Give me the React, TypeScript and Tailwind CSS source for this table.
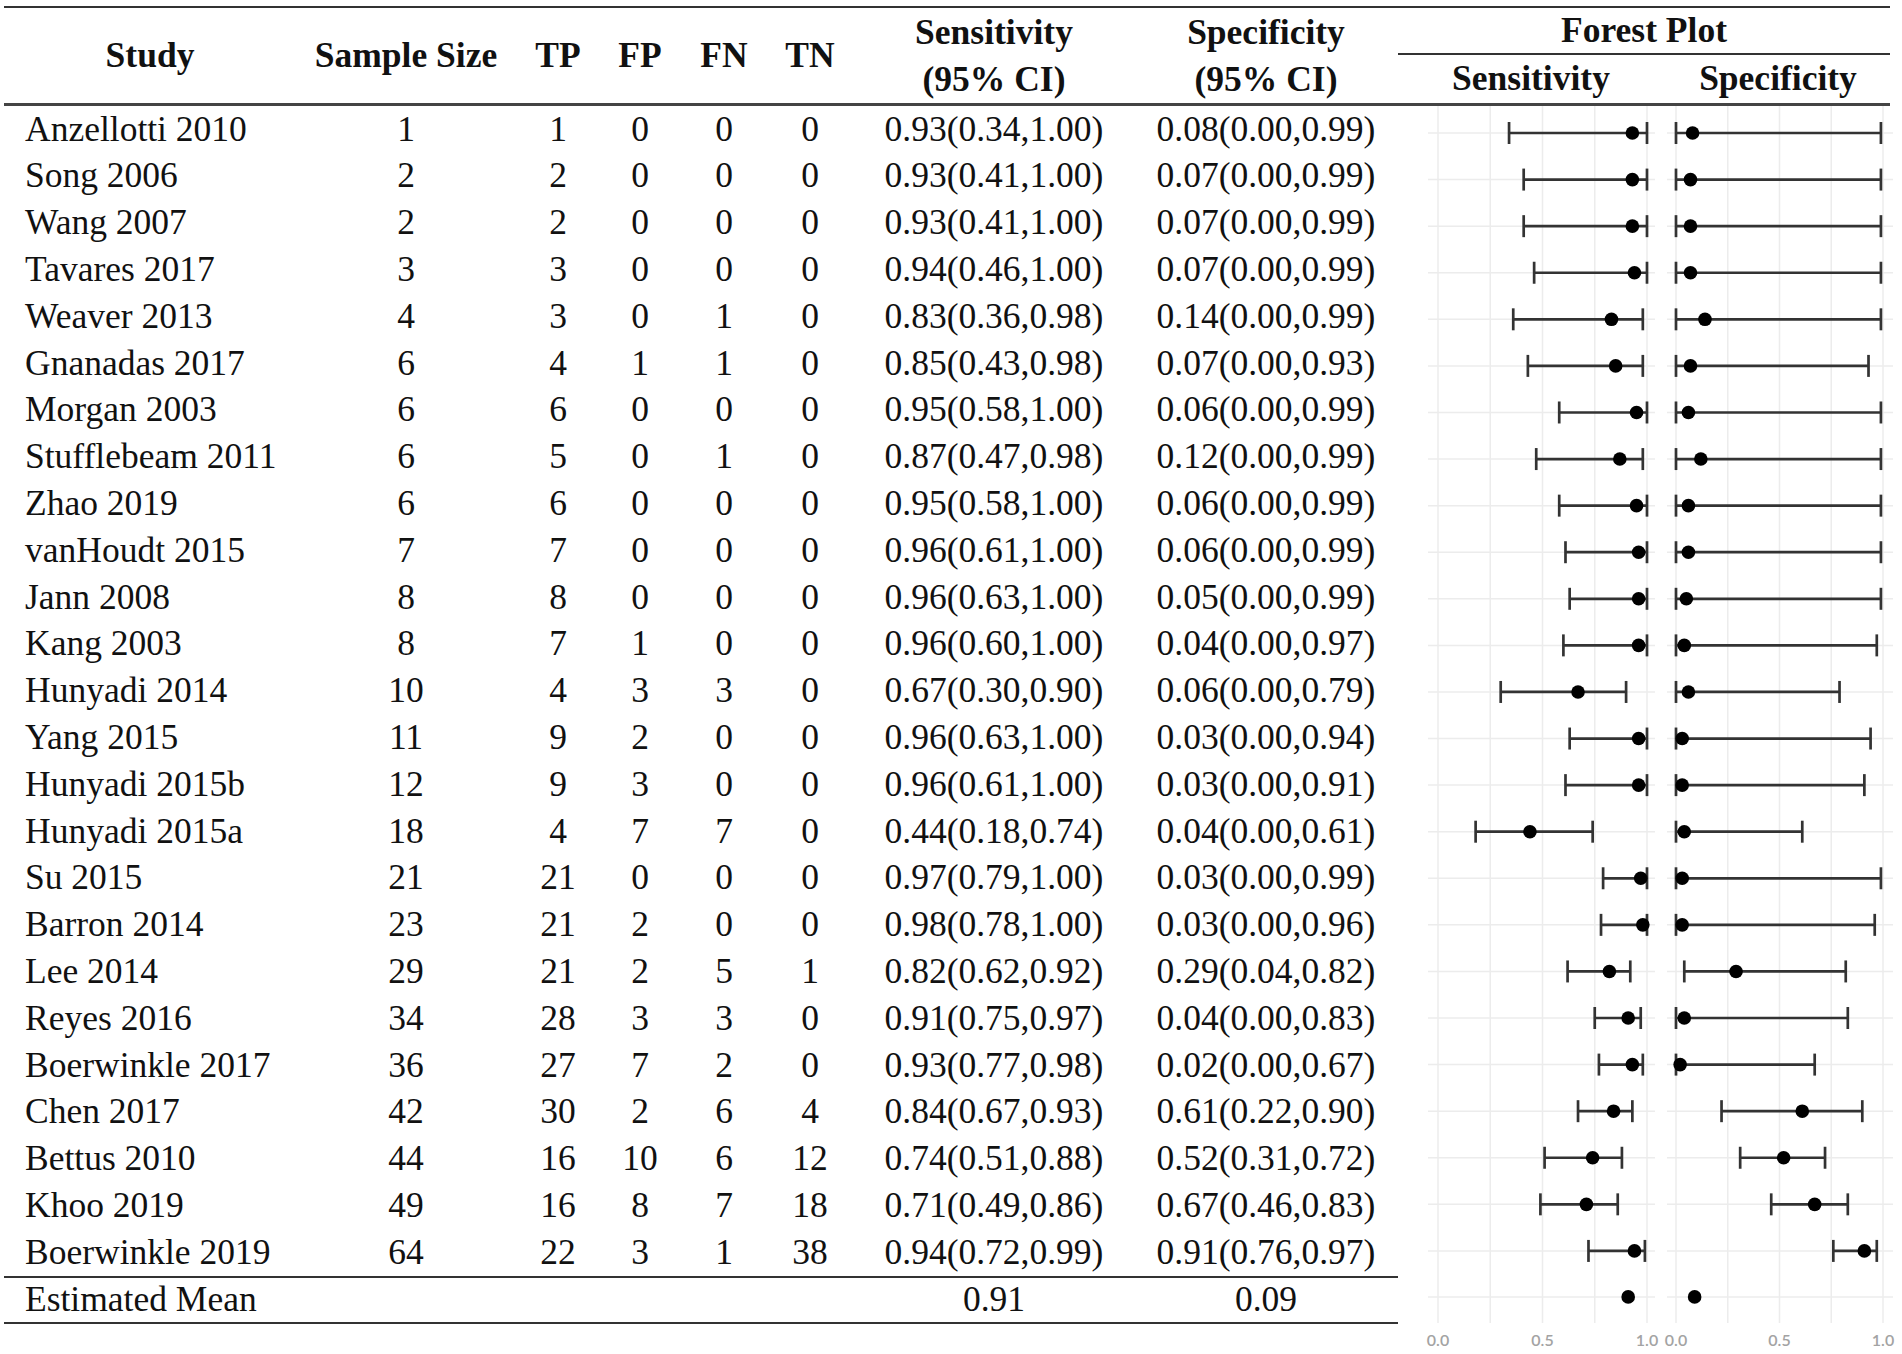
import React from "react";

type Row = {
  study: string;
  n: number;
  tp: number;
  fp: number;
  fn: number;
  tn: number;
  sens: [number, number, number];
  spec: [number, number, number];
};

const rows: Row[] = [
  { study: "Anzellotti 2010", n: 1, tp: 1, fp: 0, fn: 0, tn: 0, sens: [0.93, 0.34, 1.0], spec: [0.08, 0.0, 0.99] },
  { study: "Song 2006", n: 2, tp: 2, fp: 0, fn: 0, tn: 0, sens: [0.93, 0.41, 1.0], spec: [0.07, 0.0, 0.99] },
  { study: "Wang 2007", n: 2, tp: 2, fp: 0, fn: 0, tn: 0, sens: [0.93, 0.41, 1.0], spec: [0.07, 0.0, 0.99] },
  { study: "Tavares 2017", n: 3, tp: 3, fp: 0, fn: 0, tn: 0, sens: [0.94, 0.46, 1.0], spec: [0.07, 0.0, 0.99] },
  { study: "Weaver 2013", n: 4, tp: 3, fp: 0, fn: 1, tn: 0, sens: [0.83, 0.36, 0.98], spec: [0.14, 0.0, 0.99] },
  { study: "Gnanadas 2017", n: 6, tp: 4, fp: 1, fn: 1, tn: 0, sens: [0.85, 0.43, 0.98], spec: [0.07, 0.0, 0.93] },
  { study: "Morgan 2003", n: 6, tp: 6, fp: 0, fn: 0, tn: 0, sens: [0.95, 0.58, 1.0], spec: [0.06, 0.0, 0.99] },
  { study: "Stufflebeam 2011", n: 6, tp: 5, fp: 0, fn: 1, tn: 0, sens: [0.87, 0.47, 0.98], spec: [0.12, 0.0, 0.99] },
  { study: "Zhao 2019", n: 6, tp: 6, fp: 0, fn: 0, tn: 0, sens: [0.95, 0.58, 1.0], spec: [0.06, 0.0, 0.99] },
  { study: "vanHoudt 2015", n: 7, tp: 7, fp: 0, fn: 0, tn: 0, sens: [0.96, 0.61, 1.0], spec: [0.06, 0.0, 0.99] },
  { study: "Jann 2008", n: 8, tp: 8, fp: 0, fn: 0, tn: 0, sens: [0.96, 0.63, 1.0], spec: [0.05, 0.0, 0.99] },
  { study: "Kang 2003", n: 8, tp: 7, fp: 1, fn: 0, tn: 0, sens: [0.96, 0.6, 1.0], spec: [0.04, 0.0, 0.97] },
  { study: "Hunyadi 2014", n: 10, tp: 4, fp: 3, fn: 3, tn: 0, sens: [0.67, 0.3, 0.9], spec: [0.06, 0.0, 0.79] },
  { study: "Yang 2015", n: 11, tp: 9, fp: 2, fn: 0, tn: 0, sens: [0.96, 0.63, 1.0], spec: [0.03, 0.0, 0.94] },
  { study: "Hunyadi 2015b", n: 12, tp: 9, fp: 3, fn: 0, tn: 0, sens: [0.96, 0.61, 1.0], spec: [0.03, 0.0, 0.91] },
  { study: "Hunyadi 2015a", n: 18, tp: 4, fp: 7, fn: 7, tn: 0, sens: [0.44, 0.18, 0.74], spec: [0.04, 0.0, 0.61] },
  { study: "Su 2015", n: 21, tp: 21, fp: 0, fn: 0, tn: 0, sens: [0.97, 0.79, 1.0], spec: [0.03, 0.0, 0.99] },
  { study: "Barron 2014", n: 23, tp: 21, fp: 2, fn: 0, tn: 0, sens: [0.98, 0.78, 1.0], spec: [0.03, 0.0, 0.96] },
  { study: "Lee 2014", n: 29, tp: 21, fp: 2, fn: 5, tn: 1, sens: [0.82, 0.62, 0.92], spec: [0.29, 0.04, 0.82] },
  { study: "Reyes 2016", n: 34, tp: 28, fp: 3, fn: 3, tn: 0, sens: [0.91, 0.75, 0.97], spec: [0.04, 0.0, 0.83] },
  { study: "Boerwinkle 2017", n: 36, tp: 27, fp: 7, fn: 2, tn: 0, sens: [0.93, 0.77, 0.98], spec: [0.02, 0.0, 0.67] },
  { study: "Chen 2017", n: 42, tp: 30, fp: 2, fn: 6, tn: 4, sens: [0.84, 0.67, 0.93], spec: [0.61, 0.22, 0.9] },
  { study: "Bettus 2010", n: 44, tp: 16, fp: 10, fn: 6, tn: 12, sens: [0.74, 0.51, 0.88], spec: [0.52, 0.31, 0.72] },
  { study: "Khoo 2019", n: 49, tp: 16, fp: 8, fn: 7, tn: 18, sens: [0.71, 0.49, 0.86], spec: [0.67, 0.46, 0.83] },
  { study: "Boerwinkle 2019", n: 64, tp: 22, fp: 3, fn: 1, tn: 38, sens: [0.94, 0.72, 0.99], spec: [0.91, 0.76, 0.97] },
];

const ci = (v: [number, number, number]) =>
  `${v[0].toFixed(2)}(${v[1].toFixed(2)},${v[2].toFixed(2)})`;

// column widths of the left table part
const cols = "grid grid-cols-[292px_220px_84px_80px_88px_84px_284px_260px]";

// forest plot geometry (svg local coords)
const SENS = { x0: 42, w: 209, g0: 32, g1: 259 };
const SPEC = { x0: 280, w: 207, g0: 271, g1: 497 };
const rowY = (i: number) => 27 + i * 46.58;
const meanY = rowY(24) + 46;

function Panel({ axis, pick, mean }: { axis: typeof SENS; pick: (r: Row) => [number, number, number]; mean: number }) {
  const sx = (v: number) => axis.x0 + v * axis.w;
  return (
    <g>
      {[0, 0.25, 0.5, 0.75, 1].map((t) => (
        <line key={t} x1={sx(t)} x2={sx(t)} y1={0} y2={1217} stroke="#ececec" strokeWidth={1.5} />
      ))}
      {rows.map((r, i) => (
        <line key={"h" + i} x1={axis.g0} x2={axis.g1} y1={rowY(i)} y2={rowY(i)} stroke="#ececec" strokeWidth={1.5} />
      ))}
      <line x1={axis.g0} x2={axis.g1} y1={meanY} y2={meanY} stroke="#ececec" strokeWidth={1.5} />
      {rows.map((r, i) => {
        const [p, lo, hi] = pick(r);
        const y = rowY(i);
        return (
          <g key={"e" + i} stroke="#333" strokeWidth={2.7}>
            <line x1={sx(lo)} x2={sx(hi)} y1={y} y2={y} />
            <line x1={sx(lo)} x2={sx(lo)} y1={y - 11} y2={y + 11} />
            <line x1={sx(hi)} x2={sx(hi)} y1={y - 11} y2={y + 11} />
            <circle cx={sx(p)} cy={y} r={6.8} fill="#000" stroke="none" />
          </g>
        );
      })}
      <circle cx={sx(mean)} cy={meanY} r={6.8} fill="#000" />
      {[0, 0.5, 1].map((t) => (
        <text key={"l" + t} x={sx(t)} y={1240} textAnchor="middle" fontSize={16} fontWeight={600} fill="#a3a3a3" fontFamily="Lato, 'Open Sans', sans-serif">
          {t.toFixed(1)}
        </text>
      ))}
    </g>
  );
}

export default function App() {
  return (
    <div className="w-[1902px] h-[1354px] bg-white text-[#111] font-['Liberation_Serif','Times_New_Roman',serif] text-[35.5px] overflow-hidden">
      <div className="ml-[4px] mt-[6px] w-[1886px] border-t-2 border-[#333]">
        {/* header */}
        <div className="flex h-[98px] border-b-[3px] border-[#444] font-bold">
          <div className={cols + " h-[95px] items-center text-center"}>
            <div>Study</div>
            <div>Sample Size</div>
            <div>TP</div>
            <div>FP</div>
            <div>FN</div>
            <div>TN</div>
            <div className="leading-[47px]">
              Sensitivity
              <br />
              (95% CI)
            </div>
            <div className="leading-[47px]">
              Specificity
              <br />
              (95% CI)
            </div>
          </div>
          <div className="flex flex-col w-[494px]">
            <div className="ml-[2px] h-[47px] border-b-2 border-[#333] flex items-center justify-center">Forest Plot</div>
            <div className="flex h-[48px] items-center">
              <div className="w-[270px] text-center">Sensitivity</div>
              <div className="w-[224px] text-center">Specificity</div>
            </div>
          </div>
        </div>

        {/* body */}
        <div className="flex">
          <div className="w-[1392px]">
            {rows.map((r) => (
              <div key={r.study} className={cols + " h-[46.8px] items-center text-center leading-none"}>
                <div className="text-left pl-[21px] whitespace-nowrap">{r.study}</div>
                <div>{r.n}</div>
                <div>{r.tp}</div>
                <div>{r.fp}</div>
                <div>{r.fn}</div>
                <div>{r.tn}</div>
                <div>{ci(r.sens)}</div>
                <div>{ci(r.spec)}</div>
              </div>
            ))}
            <div className={cols + " h-[48px] items-center text-center leading-none border-y-2 border-[#333] w-[1394px]"}>
              <div className="text-left pl-[21px] whitespace-nowrap">Estimated Mean</div>
              <div />
              <div />
              <div />
              <div />
              <div />
              <div>0.91</div>
              <div>0.09</div>
            </div>
          </div>
          <svg width={506} height={1248} className="overflow-visible shrink-0">
            <Panel axis={SENS} pick={(r) => r.sens} mean={0.91} />
            <Panel axis={SPEC} pick={(r) => r.spec} mean={0.09} />
          </svg>
        </div>
      </div>
    </div>
  );
}
